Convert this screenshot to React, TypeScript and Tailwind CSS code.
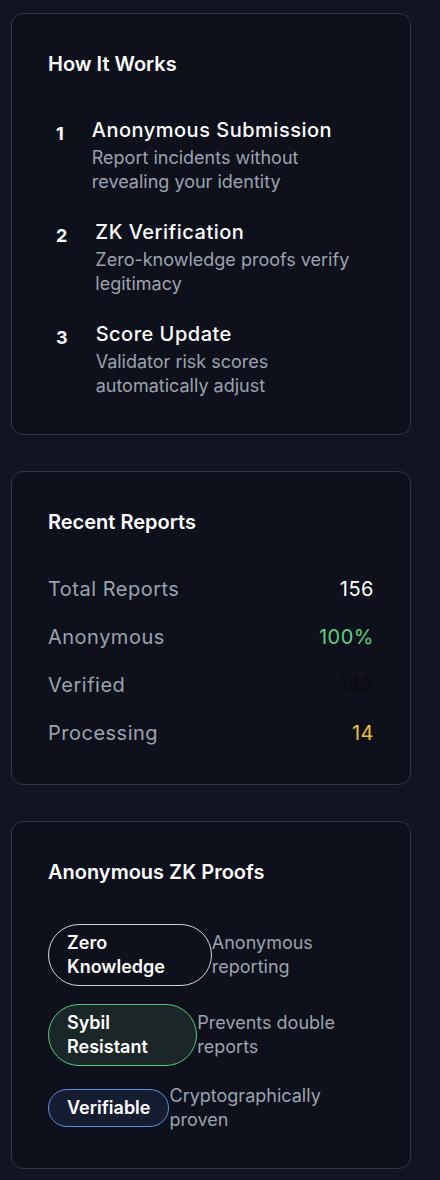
import React from 'react';

interface Step {
  n: string;
  title: string;
  desc: string;
}

const steps: Step[] = [
  { n: '1', title: 'Anonymous Submission', desc: 'Report incidents without revealing your identity' },
  { n: '2', title: 'ZK Verification', desc: 'Zero-knowledge proofs verify legitimacy' },
  { n: '3', title: 'Score Update', desc: 'Validator risk scores automatically adjust' },
];

const stats = [
  { label: 'Total Reports', value: '156', color: 'text-white' },
  { label: 'Anonymous', value: '100%', color: 'text-[#5cd07e]' },
  { label: 'Verified', value: '142', color: 'text-[#0a0a0c]' },
  { label: 'Processing', value: '14', color: 'text-[#eac33c]' },
];

const proofs = [
  { name: 'Zero Knowledge', desc: 'Anonymous reporting', pill: 'border-[#d4d4d8] bg-transparent' },
  { name: 'Sybil Resistant', desc: 'Prevents double reports', pill: 'border-[#55c977] bg-[#1b2628]' },
  { name: 'Verifiable', desc: 'Cryptographically proven', pill: 'border-[#5a8fe3] bg-[#161d31]' },
];

function Card({ title, children }: { title: string; children: React.ReactNode }) {
  return (
    <section className="w-[400px] rounded-xl border border-[#343844] bg-[#0e101b] p-9">
      <h2 className="mb-[38px] text-xl leading-7 font-semibold text-white">{title}</h2>
      {children}
    </section>
  );
}

export default function App() {
  return (
    <div
      className="min-h-[1180px] bg-[#121421] pl-[11px] pt-[13px] pb-4"
      style={{ fontFamily: 'Inter, "Noto Sans", sans-serif' }}
    >
      <div className="flex flex-col gap-9">
        <Card title="How It Works">
          <ol className="flex flex-col gap-6">
            {steps.map((s) => (
              <li key={s.n} className="flex items-start gap-5">
                <span className="px-2 py-1 text-lg leading-7 font-bold text-white">{s.n}</span>
                <div>
                  <h3 className="mb-0.5 text-xl leading-7 font-medium tracking-wide text-white">{s.title}</h3>
                  <p className="text-lg leading-6 text-[#9ca3af]">{s.desc}</p>
                </div>
              </li>
            ))}
          </ol>
        </Card>

        <Card title="Recent Reports">
          <div className="flex flex-col gap-[18px]">
            {stats.map((s) => (
              <div key={s.label} className="flex items-center justify-between text-xl leading-[30px] tracking-wide">
                <span className="text-[#9ca3af]">{s.label}</span>
                <span className={s.color}>{s.value}</span>
              </div>
            ))}
          </div>
        </Card>

        <Card title="Anonymous ZK Proofs">
          <div className="flex flex-col gap-[18px]">
            {proofs.map((p) => (
              <div key={p.name} className="flex items-center">
                <span
                  className={`rounded-full border px-[18px] py-1.5 text-lg leading-6 font-semibold text-white ${p.pill}`}
                >
                  {p.name}
                </span>
                <span className="text-lg leading-6 text-[#9ca3af]">{p.desc}</span>
              </div>
            ))}
          </div>
        </Card>
      </div>
    </div>
  );
}
